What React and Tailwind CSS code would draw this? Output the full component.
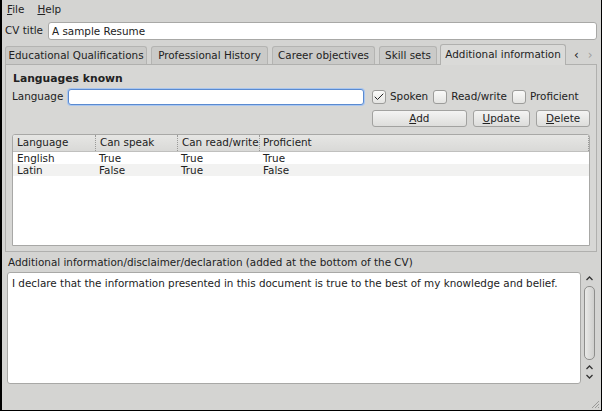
import { Check } from 'lucide-react'

const tabs = [
  { label: 'Educational Qualifications', w: 'w-[142px]' },
  { label: 'Professional History', w: 'w-[117px]' },
  { label: 'Career objectives', w: 'w-[103px]' },
  { label: 'Skill sets', w: 'w-[58px]' },
]

const rows = [
  ['English', 'True', 'True', 'True'],
  ['Latin', 'False', 'True', 'False'],
]

function CheckBox({ checked, label }) {
  return (
    <label className="flex items-center gap-[4px]">
      <span className="w-[14px] h-[14px] rounded-[3px] border border-[#9c9c9a] bg-gradient-to-b from-[#fafaf9] to-[#e4e4e2] flex items-center justify-center">
        {checked && <Check size={12} strokeWidth={2} className="text-[#222]" />}
      </span>
      <span>{label}</span>
    </label>
  )
}

function Button({ children, className = '' }) {
  return (
    <button className={`h-[17px] rounded-[3px] border border-[#a2a2a0] bg-gradient-to-b from-[#f4f4f3] to-[#dddddb] text-center leading-[15px] ${className}`}>
      {children}
    </button>
  )
}

export default function App() {
  return (
    <div className="w-[602px] h-[411px] bg-[#d4d4d2] border-l-2 border-r border-b border-black flex flex-col font-['DejaVu_Sans',sans-serif] text-[10.4px] text-[#222] whitespace-nowrap overflow-hidden relative">
      <div className="h-[19px] flex items-center gap-[13px] px-[5px]">
        <span><u>F</u>ile</span>
        <span><u>H</u>elp</span>
      </div>

      <div className="flex items-center gap-[5px] pl-[3px] pr-[4px] mt-[3px]">
        <span>CV title</span>
        <div className="flex-1 h-[18px] rounded-[3px] border border-[#a8a8a6] bg-white px-[3px] leading-[16px]">A sample Resume</div>
      </div>

      <div className="flex items-end pl-[3px] pr-[4px] mt-[3px] h-[21px]">
        {tabs.map(t => (
          <div key={t.label} className={`${t.w} h-[18px] mr-[4px] rounded-t-[3px] border border-b-0 border-[#b4b4b2] bg-[#cacac8] flex items-center justify-center`}>
            {t.label}
          </div>
        ))}
        <div className="w-[126px] -ml-[1px] h-[21px] rounded-t-[3px] border border-b-0 border-[#b0b0ae] bg-[#dadad8] flex items-center justify-center -mb-px z-10">
          Additional information
        </div>
        <div className="flex items-center gap-[9px] ml-[8px] h-[19px] text-[12px]">
          <span>&lsaquo;</span>
          <span className="text-[#a0a09e]">&rsaquo;</span>
        </div>
      </div>

      <div className="ml-[3px] mr-[4px] h-[188px] border border-[#b0b0ae] bg-[#d7d7d5] pt-[6px] px-[6px] pb-[5px] flex flex-col">
        <div className="font-bold text-[10.8px] pl-[1px]">Languages known</div>
        <div className="grid grid-cols-[1fr_218px] gap-x-[8px] gap-y-[5px] mt-[2px]">
          <div className="flex items-center gap-[5px]">
            <span>Language</span>
            <div className="flex-1 h-[16px] rounded-[3px] border border-[#5a8ad0] bg-white shadow-[0_0_0_1px_#a9c6ef]" />
          </div>
          <div className="flex items-center gap-[5px]">
            <CheckBox checked label="Spoken" />
            <CheckBox label="Read/write" />
            <CheckBox label="Proficient" />
          </div>
          <div />
          <div className="flex gap-[6px]">
            <Button className="w-[95px]"><u>A</u>dd</Button>
            <Button className="w-[58px]"><u>U</u>pdate</Button>
            <Button className="w-[54px]"><u>D</u>elete</Button>
          </div>
        </div>

        <div className="mt-[7px] flex-1 rounded-t-[3px] border border-[#a8a8a6] bg-white overflow-hidden">
          <div className="h-[17px] flex items-center bg-gradient-to-b from-[#e6e6e4] to-[#d9d9d7] border-b border-[#c0c0be]">
            {['Language', 'Can speak', 'Can read/write'].map((h, i) => (
              <div key={h} className={`w-[82px] h-full flex items-center pl-[4px] ${i > 0 ? 'border-l border-dotted border-[#9a9a98]' : ''}`}>{h}</div>
            ))}
            <div className="flex-1 h-full flex items-center pl-[3px] border-l border-r border-dotted border-[#9a9a98]">Proficient</div>
          </div>
          {rows.map((r, ri) => (
            <div key={r[0]} className={`h-[12px] flex items-center leading-[12px] ${ri % 2 ? 'bg-[#f2f2f1]' : 'bg-white'}`}>
              {r.map((c, i) => (
                <div key={i} className="w-[82px] pl-[4px]">{c}</div>
              ))}
            </div>
          ))}
        </div>
      </div>

      <div className="px-[6px] mt-[3px]">Additional information/disclaimer/declaration (added at the bottom of the CV)</div>

      <div className="flex mt-[1px] pl-[5px] pr-[4px] h-[112px]">
        <div className="flex-1 rounded-[3px] border border-[#a8a8a6] bg-white px-[4px] pt-[3px]">
          I declare that the information presented in this document is true to the best of my knowledge and belief.
        </div>
        <div className="w-[15px] ml-[1px] flex flex-col items-center text-[#333]">
          <svg width="9" height="9" viewBox="0 0 9 9" className="mt-[2px]"><path d="M1.5 6 L4.5 3 L7.5 6" fill="none" stroke="currentColor" strokeWidth="1.3" /></svg>
          <div className="mt-[3px] w-[11px] h-[74px] rounded-[5px] border border-[#8e8e8c] bg-gradient-to-r from-[#e9e9e7] to-[#cfcfcd]" />
          <svg width="9" height="9" viewBox="0 0 9 9" className="mt-[3px]"><path d="M1.5 6 L4.5 3 L7.5 6" fill="none" stroke="currentColor" strokeWidth="1.3" /></svg>
          <svg width="9" height="9" viewBox="0 0 9 9"><path d="M1.5 3 L4.5 6 L7.5 3" fill="none" stroke="currentColor" strokeWidth="1.3" /></svg>
        </div>
      </div>

      <svg width="10" height="10" viewBox="0 0 10 10" className="absolute right-[1px] bottom-[1px] text-[#9a9a98]">
        <path d="M9 2 L2 9 M9 5 L5 9 M9 8 L8 9" stroke="currentColor" strokeWidth="1" />
      </svg>
    </div>
  )
}
